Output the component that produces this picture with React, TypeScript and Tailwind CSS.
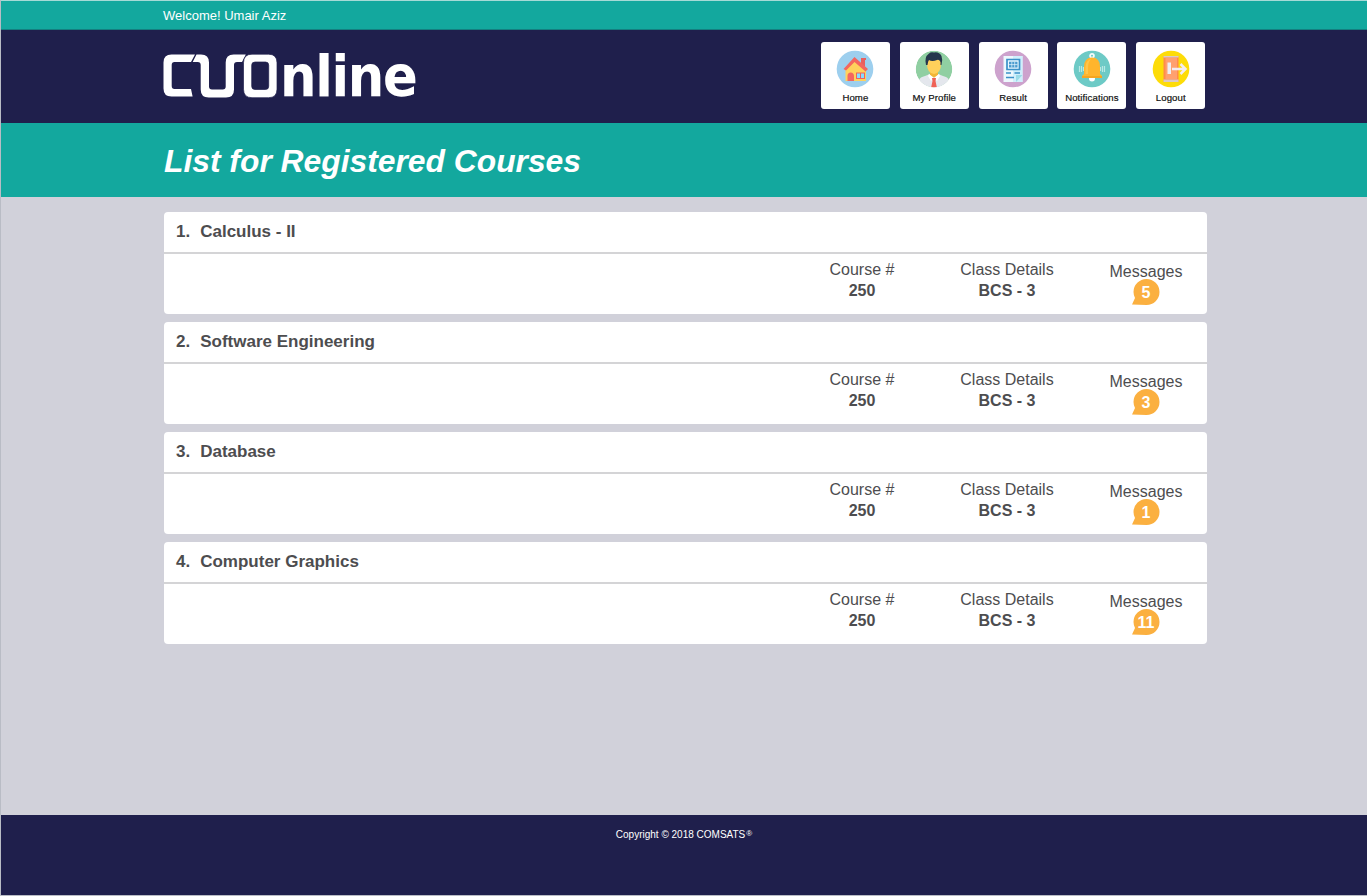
import React from "react";

const courses = [
  { name: "Calculus - II", messages: 5 },
  { name: "Software Engineering", messages: 3 },
  { name: "Database", messages: 1 },
  { name: "Computer Graphics", messages: 11 },
];

function Logo() {
  return (
    <div className="flex h-[84px] items-start text-white">
      <svg className="shrink-0" width="117" height="84" viewBox="163 34 117 84" aria-hidden="true">
        <g fill="#fff">
          <path d="M171.500 54.500H195L191 62H174.500Q171.700 62 171.700 65V86Q171.700 89 174.500 89H191L192.600 96.500H171.500Q163.500 96.500 163.500 88.500V62.500Q163.500 54.500 171.500 54.500Z" />
          <path d="M196.500 54.500H201Q209 54.500 209 62.500V86.500Q209 89.500 212 89.500H222.700Q225.700 89.500 225.700 86.500V62.500Q225.700 54.500 233.700 54.500H245.800L242 62H237Q234 62 234 65V89.500Q234 97.500 226 97.500H208.700Q200.700 97.500 200.700 89.500V65Q200.700 62 197.700 62H192.700Z" />
          <path fillRule="evenodd" stroke="#1f1f4c" strokeWidth="0.7" d="M252 54.200H268.500Q277 54.200 277 62.700V89.200Q277 97.700 268.500 97.700H252Q243.500 97.700 243.500 89.200V62.700Q243.500 54.200 252 54.200ZM255 62Q251.700 62 251.700 65.200V86.200Q251.700 89.500 255 89.500H265.500Q268.700 89.500 268.700 86.200V65.200Q268.700 62 265.500 62Z" />
        </g>
      </svg>
      <span className="pt-[2px] font-['DejaVu_Sans_Condensed','DejaVu_Sans',sans-serif] text-[57px] leading-[80px] font-bold tracking-[-1.300px] [font-stretch:condensed]">nline</span>
    </div>
  );
}

function HomeIcon() {
  return (
    <svg width="38" height="38" viewBox="0 0 38 38">
      <circle cx="19" cy="19" r="18.300" fill="#9dcfee" />
      <path d="M9.500 19 18 10.500 30 19V31H9.500Z" fill="#ffd15c" />
      <path d="M25 8H30V10H29V17L25 14Z" fill="#e8605f" />
      <path d="M18.500 7 32 19 29.500 21.500 18.500 12 10 20.500 7.500 19Z" fill="#f3665f" />
      <path d="M11.500 31V26Q11.500 22.500 14.700 22.500T18 26V31Z" fill="#f3665f" />
      <path d="M20 22.500H29V29H20Z" fill="#f1605f" />
      <path d="M21 23.500H24V28H21ZM25 23.500H28V28H25Z" fill="#84dbff" />
    </svg>
  );
}

function ProfileIcon() {
  return (
    <svg width="38" height="38" viewBox="0 0 38 38">
      <defs><clipPath id="profileClip"><circle cx="19" cy="19" r="18.300" /></clipPath></defs>
      <g clipPath="url(#profileClip)">
        <circle cx="19" cy="19" r="18.300" fill="#90cfa2" />
        <path d="M4 38V30Q5 27 10 26L15 24H23L28 26Q33 27 34 30V38Z" fill="#e4e7ed" />
        <path d="M15 20H23V25L19 28 15 25Z" fill="#f2b636" />
        <path d="M12 9H26V14Q26 23 19 24Q12 23 12 14Z" fill="#ffd05b" />
        <path d="M11 15Q9 7 14 3.500Q16 1.500 19 2.500Q24 1.500 26.500 6Q28 10 26.500 15H25.500V12Q24 9 22 10Q17 12 14 10Q13 11 12.500 15Z" fill="#25364c" />
        <path d="M14 24 19 28 16 31 13 26ZM24 24 19 28 22 31 25 26Z" fill="#fff" />
        <path d="M17 28H21L20.500 31 22 38H16L17.500 31Z" fill="#ef6256" />
      </g>
    </svg>
  );
}

function ResultIcon() {
  return (
    <svg width="38" height="38" viewBox="0 0 38 38">
      <circle cx="19" cy="19" r="18.300" fill="#cda2cd" />
      <path d="M9.500 6H28.500V32H9.500Z" fill="#edf8fd" />
      <path d="M19 6H28.500V32H19Z" fill="#cfeffc" />
      <path d="M22 25H28.500L22 32Z" fill="#9bdce8" />
      <path d="M13 9.500H25.500V19.500H13Z" fill="#e8f8ff" stroke="#3b91c8" strokeWidth="1.700" />
      <path d="M15 11.700H23.500V17.500H15Z" fill="#4a9bce" />
      <path d="M17.800 11.700V17.500M20.700 11.700V17.500M15 14.600H23.500" stroke="#e8f8ff" strokeWidth=".7" />
      <path d="M12 23H17M20.500 23H26M12 27.500H20" stroke="#3b91c8" strokeWidth="1.500" />
    </svg>
  );
}

function BellIcon() {
  return (
    <svg width="38" height="38" viewBox="0 0 38 38">
      <circle cx="19" cy="19" r="18.300" fill="#6dcac6" />
      <path d="M6.500 16V22M8.500 16V22M10.500 17V21M27.500 17V21M29.500 16V22M31.500 16V22" stroke="#b8e8e4" strokeWidth="1.200" />
      <circle cx="19" cy="5.800" r="1.900" fill="none" stroke="#f4fbfb" strokeWidth="1.800" />
      <circle cx="19" cy="28.500" r="3" fill="#fff" />
      <path d="M11 24V17Q11 7.500 19 7.500T27 17V24L29 26V28H9V26Z" fill="#ffb52d" />
      <path d="M12.500 24V17Q13 10 18 9Q15 12 15 18V24Z" fill="#ffc54b" />
      <path d="M9 26H29V28H9Z" fill="#f6a51f" />
    </svg>
  );
}

function LogoutIcon() {
  return (
    <svg width="38" height="38" viewBox="0 0 38 38">
      <circle cx="19" cy="19" r="18.300" fill="#fddc08" />
      <path d="M11.500 6H26.500V32H11.500Z" fill="#ff8b4c" />
      <path d="M11.500 6H26.500V7.500H11.500ZM11.500 29.500H26.500V32H11.500Z" fill="#dac9c6" />
      <path d="M13.500 8H25V29H13.500Z" fill="#ffa06f" />
      <path d="M15.500 12.500H19V24H15.500Z" fill="#eeeef2" />
      <path d="M20 19H33.500M28.500 14 33.500 19 28.500 24" fill="none" stroke="#f3ecf1" strokeWidth="2.500" />
    </svg>
  );
}

const navigation = [
  { label: "Home", icon: <HomeIcon /> },
  { label: "My Profile", icon: <ProfileIcon /> },
  { label: "Result", icon: <ResultIcon /> },
  { label: "Notifications", icon: <BellIcon /> },
  { label: "Logout", icon: <LogoutIcon /> },
];

function MessageBadge({ count }: { count: number }) {
  return (
    <div className="relative mx-auto h-[26px] w-[28px]">
      <svg className="absolute inset-0" width="28" height="26" viewBox="0 0 28 26">
        <path d="M14.500 0A13 13 0 0 1 14.500 26L0 25.500 3 19Q1.500 16 1.500 13A13 13 0 0 1 14.500 0Z" fill="#fbb040" />
      </svg>
      <span className="absolute inset-0 text-center text-[16px] leading-[28px] font-bold text-white">{count}</span>
    </div>
  );
}

export default function App() {
  return (
    <div className="flex h-[896px] w-[1367px] flex-col overflow-hidden border-b border-l border-[#b9bcc5] bg-[#d1d1da] font-['Liberation_Sans',Arial,sans-serif] text-[#4d4d4f]">
      <div className="h-[30px] border-t border-b border-t-[#a6dad6] border-b-[#147f80] bg-[#13a89e] pl-[162px] text-[13px] leading-[29px] text-white">
        Welcome! Umair Aziz
      </div>
      <header className="flex h-[93px] bg-[#1f1f4c] pl-[162px]">
        <div className="w-[657.900px] pt-[4px]"><Logo /></div>
        <nav className="flex gap-[9.850px] pt-[12.400px]">
          {navigation.map((item) => (
            <a key={item.label} className="flex h-[66.800px] w-[69px] flex-col items-center rounded-[3px] bg-white pt-[7.600px] text-[9.600px] leading-[16px] tracking-[0.1px] text-[#111] [-webkit-text-stroke:0.200px_#111]">
              {item.icon}
              <span className="mt-[2px] whitespace-nowrap">{item.label}</span>
            </a>
          ))}
        </nav>
      </header>
      <div className="h-[74px] bg-[#13a89e] pl-[163px]">
        <h1 className="text-[31.800px] leading-[76px] font-bold text-white italic">List for Registered Courses</h1>
      </div>
      <main className="flex flex-1 flex-col gap-[8px] pt-[15px] pl-[162.700px]">
        {courses.map((course, index) => (
          <section key={course.name} className="h-[102px] w-[1043.600px] overflow-hidden rounded-[4px] bg-white">
            <h2 className="flex h-[42px] border-b-2 border-[#d4d4d6] pl-[12.300px] text-[17px] leading-[39px] font-bold">
              <span className="w-[24.200px]">{index + 1}.</span>
              <span>{course.name}</span>
            </h2>
            <div className="flex pl-[638.300px] text-center text-[16px] leading-[21px]">
              <div className="w-[120px] pt-[5px]"><div>Course #</div><div className="font-bold">250</div></div>
              <div className="w-[170px] pt-[5px]"><div>Class Details</div><div className="font-bold">BCS - 3</div></div>
              <div className="w-[108px] pt-[7px]"><div className="h-[18px]">Messages</div><MessageBadge count={course.messages} /></div>
            </div>
          </section>
        ))}
      </main>
      <footer className="flex h-[80px] justify-center bg-[#1f1f4c] pt-[12px] text-[10px] leading-[16px] text-white">
        <span>Copyright © 2018 COMSATS</span><span className="ml-[1px] text-[8px] leading-[14px]">®</span>
      </footer>
    </div>
  );
}
